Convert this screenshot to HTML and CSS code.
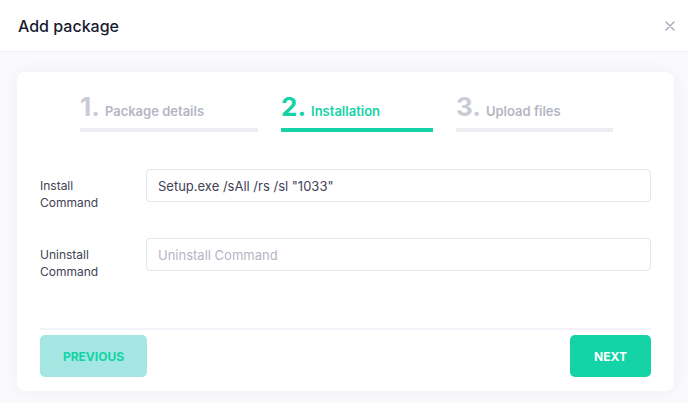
FILE: index.html
```html
<!DOCTYPE html>
<html lang="en">
<head>
    <meta charset="UTF-8">
    <meta name="viewport" content="width=device-width, initial-scale=1.0">
    <title>Add package</title>
    <link rel="stylesheet" href="styles.css">
</head>
<body>

    <div class="modal-header">
        <h2>Add package</h2>
        <span class="close">
            <svg width="10" height="10" viewBox="0 0 10 10"><path d="M1 1L9 9M9 1L1 9" stroke="#a1a5b7" stroke-width="1.3" stroke-linecap="round"/></svg>
        </span>
    </div>

    <div class="modal-body">
        <div class="card">
            <div class="steps">
                <div class="step step-1">
                    <span class="num">1.</span><span class="title">Package details</span>
                </div>
                <div class="step step-2 active">
                    <span class="num">2.</span><span class="title">Installation</span>
                </div>
                <div class="step step-3">
                    <span class="num">3.</span><span class="title">Upload files</span>
                </div>
            </div>

            <div class="form-row">
                <label>Install<br>Command</label>
                <input type="text" value='Setup.exe /sAll /rs /sl "1033"'>
            </div>
            <div class="form-row">
                <label>Uninstall<br>Command</label>
                <input type="text" placeholder="Uninstall Command">
            </div>

            <div class="actions">
                <button class="btn-prev">Previous</button>
                <button class="btn-next">Next</button>
            </div>
        </div>
    </div>

</body>
</html>
```

FILE: styles.css
```css
body {
    font-family: Inter, "Open Sans", sans-serif;
    margin: 0;
    background-color: #fafafc;
    color: #3f4254;
}
.modal-header {
    height: 52px;
    padding: 0 9px 0 18px;
    display: flex;
    align-items: center;
    justify-content: space-between;
    background-color: #fff;
    border-bottom: 1px solid #eef0f7;
    box-sizing: border-box;
}
.modal-header h2 {
    margin: 0;
    font-size: 16px;
    font-weight: 500;
    color: #181c32;
}
.close {
    display: flex;
    padding: 4px;
}
.modal-body {
    padding: 20px 14px 12px 17px;
}
.card {
    background-color: #fff;
    border-radius: 8px;
    box-shadow: 0 0 18px rgba(60, 60, 90, 0.05);
    padding: 19px 23px 14px 23px;
}
.steps {
    display: flex;
    justify-content: center;
    gap: 23px;
    margin-left: 2px;
}
.step {
    border-bottom: 4px solid #ebedf3;
    padding-bottom: 6px;
    color: #b5b5c3;
    white-space: nowrap;
}
.step-1 { width: 178px; }
.step-2 { width: 152px; }
.step-3 { width: 157px; }
.step .num {
    font-size: 26px;
    font-weight: 700;
    color: #c9cbd6;
    margin-right: 5px;
}
.step .title {
    font-size: 13px;
    font-weight: 600;
}
.step.active {
    border-bottom-color: #14d3a6;
    color: #14d3a6;
}
.step.active .num {
    color: #14d3a6;
}
.form-row {
    display: flex;
    align-items: flex-start;
    margin-top: 37px;
}
.form-row + .form-row {
    margin-top: 27px;
}
label {
    width: 106px;
    flex-shrink: 0;
    font-size: 12px;
    line-height: 17px;
    padding-top: 8px;
}
input {
    flex: 1;
    height: 33px;
    box-sizing: border-box;
    border: 1px solid #e4e6ef;
    border-radius: 4px;
    padding: 0 11px;
    font-family: inherit;
    font-size: 13px;
    color: #3f4254;
    outline: none;
}
input::placeholder {
    color: #b5b5c3;
}
.actions {
    display: flex;
    justify-content: space-between;
    margin-top: 48px;
    padding-top: 5px;
    border-top: 2px solid #f3f4f9;
}
.actions button {
    height: 42px;
    border: none;
    border-radius: 5px;
    font-family: inherit;
    font-size: 12px;
    font-weight: 700;
    text-transform: uppercase;
    cursor: pointer;
}
.btn-prev {
    width: 107px;
    background-color: #a3e6e2;
    color: #14d3a6;
}
.btn-next {
    width: 81px;
    background-color: #14d3a6;
    color: #fff;
}
```
